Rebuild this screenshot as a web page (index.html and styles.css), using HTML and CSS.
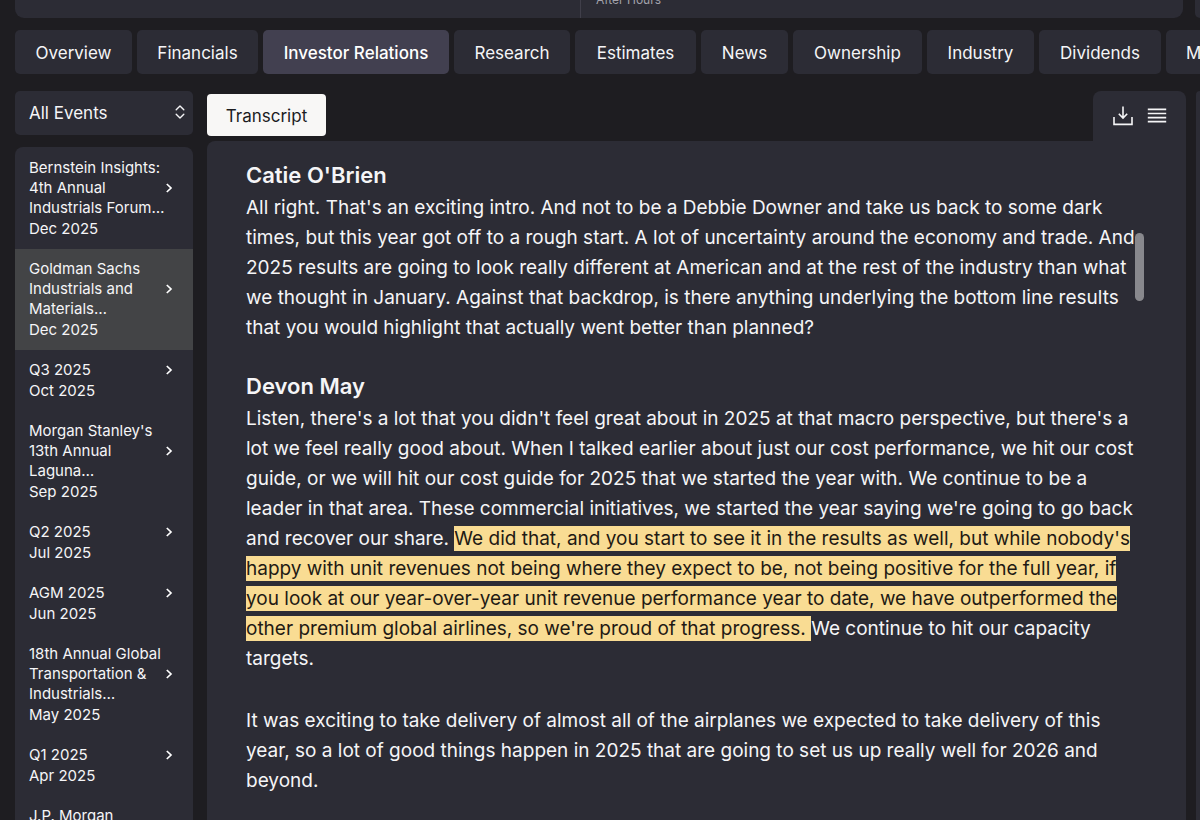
FILE: index.html
```html
<!DOCTYPE html>
<html lang="en">
<head>
  <meta charset="UTF-8">
  <meta name="viewport" content="width=device-width, initial-scale=1">
  <title>Investor Relations - Transcript</title>
  <link rel="stylesheet" href="styles.css">
</head>
<body>
  <header class="quote-row">
    <div class="quote-card">
      <div class="quote-half"></div>
      <div class="quote-half after-hours">After Hours</div>
    </div>
    <div class="quote-side"></div>
  </header>

  <nav class="tabs">
    <button class="tab">Overview</button>
    <button class="tab">Financials</button>
    <button class="tab active">Investor Relations</button>
    <button class="tab">Research</button>
    <button class="tab">Estimates</button>
    <button class="tab">News</button>
    <button class="tab">Ownership</button>
    <button class="tab">Industry</button>
    <button class="tab">Dividends</button>
    <button class="tab">More</button>
  </nav>

  <div class="content">
    <aside class="sidebar">
      <div class="filter">
        <select class="filter-select" aria-label="Filter events">
          <option>All Events</option>
        </select>
        <svg class="filter-icon" width="10" height="14" viewBox="0 0 10 14" fill="none" stroke="#f5f5f7" stroke-width="1.4" stroke-linecap="round" stroke-linejoin="round">
          <path d="M1.2 4.7 5 1l3.8 3.7M1.2 9.3 5 13l3.8-3.7"/>
        </svg>
      </div>

      <ul class="events">
        <li><button class="event">
          <span class="event-text">Bernstein Insights:<br>4th Annual<br>Industrials Forum…<span class="date">Dec 2025</span></span>
          <svg class="chevron" viewBox="0 0 8 10"><path d="M1.8 1 6 5 1.8 9"/></svg>
        </button></li>
        <li><button class="event selected">
          <span class="event-text">Goldman Sachs<br>Industrials and<br>Materials…<span class="date">Dec 2025</span></span>
          <svg class="chevron" viewBox="0 0 8 10"><path d="M1.8 1 6 5 1.8 9"/></svg>
        </button></li>
        <li><button class="event short">
          <span class="event-text">Q3 2025<span class="date">Oct 2025</span></span>
          <svg class="chevron" viewBox="0 0 8 10"><path d="M1.8 1 6 5 1.8 9"/></svg>
        </button></li>
        <li><button class="event">
          <span class="event-text">Morgan Stanley's<br>13th Annual<br>Laguna…<span class="date">Sep 2025</span></span>
          <svg class="chevron" viewBox="0 0 8 10"><path d="M1.8 1 6 5 1.8 9"/></svg>
        </button></li>
        <li><button class="event short">
          <span class="event-text">Q2 2025<span class="date">Jul 2025</span></span>
          <svg class="chevron" viewBox="0 0 8 10"><path d="M1.8 1 6 5 1.8 9"/></svg>
        </button></li>
        <li><button class="event short">
          <span class="event-text">AGM 2025<span class="date">Jun 2025</span></span>
          <svg class="chevron" viewBox="0 0 8 10"><path d="M1.8 1 6 5 1.8 9"/></svg>
        </button></li>
        <li><button class="event">
          <span class="event-text">18th Annual Global<br>Transportation &amp;<br>Industrials…<span class="date">May 2025</span></span>
          <svg class="chevron" viewBox="0 0 8 10"><path d="M1.8 1 6 5 1.8 9"/></svg>
        </button></li>
        <li><button class="event short">
          <span class="event-text">Q1 2025<span class="date">Apr 2025</span></span>
          <svg class="chevron" viewBox="0 0 8 10"><path d="M1.8 1 6 5 1.8 9"/></svg>
        </button></li>
        <li><button class="event short">
          <span class="event-text">J.P. Morgan</span>
        </button></li>
      </ul>
    </aside>

    <main class="viewer">
      <div class="viewer-bar">
        <button class="transcript-btn">Transcript</button>
        <div class="tools">
          <button class="tool" aria-label="Download">
            <svg width="20" height="20" viewBox="0 0 20 20" fill="none" stroke="#f5f5f7" stroke-width="1.6">
              <path d="M1 11v7.4h18V11M10 .4v11.4M5.8 7.8l4.2 4.2 4.2-4.2"/>
            </svg>
          </button>
          <button class="tool" aria-label="Menu">
            <svg width="20" height="20" viewBox="0 0 20 20" stroke="#f5f5f7" stroke-width="1.7">
              <path d="M.8 3.4h18.4M.8 7.5h18.4M.8 11.6h18.4M.8 15.7h18.4"/>
            </svg>
          </button>
        </div>
      </div>

      <div class="transcript">
        <section>
          <h2>Catie O'Brien</h2>
          <p>All right. That's an exciting intro. And not to be a Debbie Downer and take us back to some dark<br>
            times, but this year got off to a rough start. A lot of uncertainty around the economy and trade. And<br>
            2025 results are going to look really different at American and at the rest of the industry than what<br>
            we thought in January. Against that backdrop, is there anything underlying the bottom line results<br>
            that you would highlight that actually went better than planned?</p>
        </section>
        <section>
          <h2>Devon May</h2>
          <p>Listen, there's a lot that you didn't feel great about in 2025 at that macro perspective, but there's a<br>
            lot we feel really good about. When I talked earlier about just our cost performance, we hit our cost<br>
            guide, or we will hit our cost guide for 2025 that we started the year with. We continue to be a<br>
            leader in that area. These commercial initiatives, we started the year saying we're going to go back<br>
            and recover our share. <mark>We did that, and you start to see it in the results as well, but while nobody's<br>
            happy with unit revenues not being where they expect to be, not being positive for the full year, if<br>
            you look at our year-over-year unit revenue performance year to date, we have outperformed the<br>
            other premium global airlines, so we're proud of that progress. </mark>We continue to hit our capacity<br>
            targets.</p>
          <p>It was exciting to take delivery of almost all of the airplanes we expected to take delivery of this<br>
            year, so a lot of good things happen in 2025 that are going to set us up really well for 2026 and<br>
            beyond.</p>
        </section>
        <div class="scroll-thumb"></div>
      </div>
    </main>

    <div class="next-panel"></div>
  </div>
</body>
</html>
```
FILE: styles.css
```css
* {
  box-sizing: border-box;
  margin: 0;
  padding: 0;
}

body {
  display: flex;
  flex-direction: column;
  height: 100vh;
  overflow: hidden;
  background: #1e1d21;
  color: #f5f5f7;
  font-family: Inter, "Open Sans", sans-serif;
}

button,
select {
  font-family: inherit;
  color: inherit;
  border: none;
  cursor: pointer;
}

.quote-row {
  display: flex;
  gap: 12px;
  padding-left: 15px;
}

.quote-card {
  flex: 1;
  display: flex;
  height: 18px;
  background: #2c2c35;
  border-radius: 0 0 9px 9px;
  overflow: hidden;
}

.quote-half {
  width: 565px;
}

.after-hours {
  flex: 1;
  display: flex;
  align-items: flex-end;
  padding: 0 0 9px 15px;
  border-left: 1px solid #403f4a;
  color: #a2a2ab;
  font-size: 12px;
  line-height: 18px;
}

.quote-side {
  width: 5px;
  background: #2c2c35;
  border-radius: 0 0 0 9px;
}

.tabs {
  display: grid;
  grid-template-columns: 117px 121px 186px 116px 121px 87px 129px 107px 122px max-content;
  gap: 5px;
  padding: 12px 0 0 15px;
  overflow: hidden;
}

.tab {
  height: 44px;
  padding: 2px 20px 0;
  background: #2c2c35;
  border-radius: 5px;
  font-size: 17px;
  white-space: nowrap;
}

.tab.active {
  background: #424050;
  font-weight: 500;
  color: #fff;
}

.content {
  flex: 1;
  display: flex;
  min-height: 0;
  padding: 17px 0 0 15px;
}

.sidebar {
  width: 178px;
  margin-right: 14px;
  display: flex;
  flex-direction: column;
  gap: 12px;
}

.filter {
  position: relative;
}

.filter-select {
  display: block;
  appearance: none;
  width: 100%;
  height: 44px;
  padding: 0 14px;
  background: #2c2c35;
  border-radius: 5px;
  font-size: 17px;
}

.filter-icon {
  position: absolute;
  right: 8px;
  top: 14px;
}

.events {
  flex: 1;
  min-height: 0;
  overflow: hidden;
  list-style: none;
  background: #2c2c35;
  border-radius: 8px 8px 0 0;
}

.event {
  display: flex;
  align-items: center;
  justify-content: space-between;
  width: 100%;
  padding: 10px 20px 10px 14px;
  background: none;
  font-size: 15px;
  line-height: 20px;
  text-align: left;
  white-space: nowrap;
}

.events li:first-child .event {
  padding-top: 11px;
}

.event.selected {
  background: #434446;
}

.event-text {
  width: 130px;
}

.date {
  display: block;
  margin-top: 1px;
}

.chevron {
  flex: none;
  width: 8px;
  height: 10px;
  margin-bottom: 22px;
  fill: none;
  stroke: #fff;
  stroke-width: 1.7;
}

.viewer {
  flex: 1;
  display: flex;
  flex-direction: column;
  min-width: 0;
}

.viewer-bar {
  display: flex;
  justify-content: space-between;
  height: 50px;
}

.transcript-btn {
  width: 119px;
  height: 42px;
  margin-top: 3px;
  padding-top: 2px;
  background: #f8f7f6;
  border-radius: 4px;
  color: #1c1c1f;
  font-size: 17px;
}

.tools {
  display: flex;
  align-items: center;
  justify-content: center;
  gap: 14px;
  width: 93px;
  background: #2c2c35;
  border-radius: 8px 8px 0 0;
}

.tool {
  display: flex;
  background: none;
}

.transcript {
  position: relative;
  flex: 1;
  min-height: 0;
  overflow: hidden;
  padding: 17px 40px 0 39px;
  background: #2c2c35;
  border-radius: 8px 0 0 0;
}

.transcript h2 {
  font-size: 22px;
  font-weight: 600;
  line-height: 35px;
}

.transcript p {
  font-size: 19px;
  line-height: 30px;
  white-space: nowrap;
}

.transcript section + section {
  margin-top: 26px;
}

.transcript p + p {
  margin-top: 32px;
}

.transcript mark {
  padding: 1px 0;
  background: #f9dc93;
  color: #1f1a14;
}

.scroll-thumb {
  position: absolute;
  top: 92px;
  right: 42px;
  width: 9px;
  height: 68px;
  border-radius: 5px;
  background: rgba(160, 160, 164, 0.8);
}

.next-panel {
  width: 4px;
  margin-left: 10px;
  background: #2c2c35;
  border-radius: 8px 0 0 0;
}
```
